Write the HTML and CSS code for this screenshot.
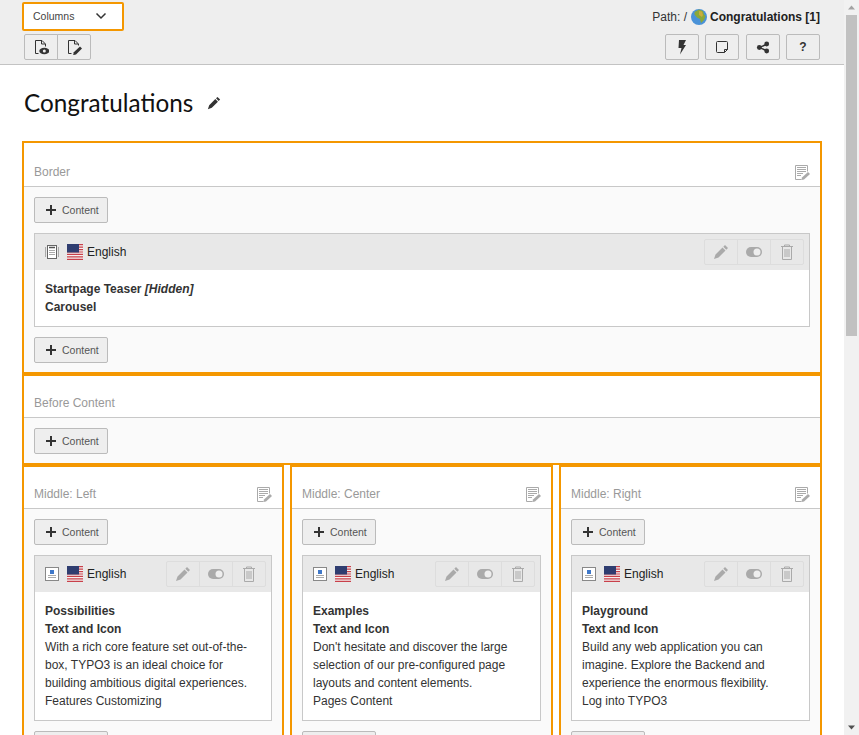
FILE: index.html
```html
<!DOCTYPE html>
<html lang="en">
<head>
    <meta charset="UTF-8">
    <meta name="viewport" content="width=device-width, initial-scale=1.0">
    <title>Columns - Congratulations</title>
    <link rel="stylesheet" href="styles.css">
</head>
<body>

    <svg class="sprites" aria-hidden="true">
        <symbol id="i-plus" viewBox="0 0 14 14"><path d="M6 2h2v4h4v2H8v4H6V8H2V6h4z" fill="currentColor"/></symbol>
        <symbol id="i-flag" viewBox="0 0 16 16">
            <rect width="16" height="16" fill="#f4f0f0"/>
            <path d="M0 0h16v1.200H0zM0 2.500h16v1.200H0zM0 5h16v1.200H0zM0 7.400h16v1.200H0zM0 9.800h16v1.200H0zM0 12.300h16v1.200H0zM0 14.800h16V16H0z" fill="#c8404a"/>
            <rect width="12" height="8.500" fill="#2f3d70"/>
        </symbol>
        <symbol id="i-pencil" viewBox="0 0 16 16"><path d="M12 1l3 3-1.700 1.700-3-3zM9.500 3.500l3 3L5.500 13.500 1 15l1.500-4.500z" fill="currentColor"/></symbol>
        <symbol id="i-toggle" viewBox="0 0 16 16"><rect y="3" width="16" height="10" rx="5" fill="currentColor"/><circle cx="11" cy="8" r="3.500" fill="#eee"/></symbol>
        <symbol id="i-trash" viewBox="0 0 16 16"><path d="M5.500 2.500V1h5v1.500M2 2.500h12M3.500 3v12.500h9V3M6 5v8M8 5v8M10 5v8" fill="none" stroke="currentColor"/></symbol>
        <symbol id="i-notes" viewBox="0 0 16 16">
            <path d="M7.500 15.500h-6v-14h12v6" fill="none" stroke="currentColor"/>
            <path d="M3 3.500h9M3 5.500h9M3 7.500h9M3 9.500h6M3 11.500h4" stroke="currentColor"/>
            <path d="M14 8l2 2-6 5.500-2.500.5.500-2.500z" fill="currentColor"/>
        </symbol>
        <symbol id="i-ce-text" viewBox="0 0 14 14">
            <rect x=".5" y=".5" width="13" height="13" fill="#fff" stroke="#888"/>
            <rect x="5" y="3" width="4" height="4" fill="#3f78c9"/>
            <path d="M3 8.500h8M3 10.500h8" stroke="#aaa"/>
        </symbol>
        <symbol id="i-ce-list" viewBox="0 0 14 14">
            <path d="M.5 2v10M13.500 2v10" stroke="#aaa"/>
            <rect x="2.500" y=".5" width="9" height="13" fill="#fff" stroke="#666"/>
            <path d="M4 2.500h6" stroke="#555" stroke-width="1.500"/>
            <path d="M4 5.500h6M4 7.500h6M4 9.500h6" stroke="#aaa"/>
        </symbol>
    </svg>

    <div class="window">
        <div class="main">

            <header class="docheader">
                <div class="docheader-row">
                    <div class="select-outline">
                        <div class="select-box">
                            <span>Columns</span>
                            <svg class="select-arrow" width="12" height="8" viewBox="0 0 12 8"><path d="M1.500 1.500l4.500 4.500 4.500-4.500" fill="none" stroke="#333" stroke-width="1.500"/></svg>
                        </div>
                    </div>
                    <div class="path">
                        Path: /
                        <svg class="globe" width="16" height="16" viewBox="0 0 16 16">
                            <circle cx="8" cy="8" r="8" fill="#4a92d8"/>
                            <path d="M3.500 3L8 .5l4 1.500 1 3.500 1.500 1.500-1.500 4-3 3-1-4-3-1.500-2.500-3z" fill="#8ba83a"/>
                            <path d="M8 2l3 .5 1 3.500-1 2-3-2z" fill="#c9ad3c"/>
                        </svg>
                        <strong>Congratulations [1]</strong>
                    </div>
                </div>
                <div class="docheader-row docheader-buttons">
                    <div class="btn-group">
                        <button class="btn">
                            <svg width="16" height="16" viewBox="0 0 16 16">
                                <path d="M5.500 14.500h-3v-13h6.500l3.500 3.500v2.500M8.500 1.500V5H12" fill="none" stroke="#333"/>
                                <ellipse cx="11.300" cy="12" rx="5" ry="3.300" fill="#333"/>
                                <circle cx="11.300" cy="12" r="1.500" fill="#eee"/>
                            </svg>
                        </button>
                        <button class="btn">
                            <svg width="16" height="16" viewBox="0 0 16 16">
                                <path d="M5.500 14.500h-3v-13h6.500l3.500 3.500v1.500M8.500 1.500V5H12" fill="none" stroke="#333"/>
                                <path d="M14 7.500l2 2-6 6-2.800.6.600-2.800z" fill="#333"/>
                            </svg>
                        </button>
                    </div>
                    <div class="btn-row">
                        <button class="btn">
                            <svg width="16" height="16" viewBox="0 0 16 16"><path d="M5 1h7L9.500 6H12l-6 9.500L7.500 9H4.500z" fill="#333"/></svg>
                        </button>
                        <button class="btn">
                            <svg width="16" height="16" viewBox="0 0 16 16"><path d="M10.500 13.500H3.500a1 1 0 0 1-1-1v-9a1 1 0 0 1 1-1h9a1 1 0 0 1 1 1v7z" fill="none" stroke="#333"/><path d="M10.500 13.500v-3h3" fill="none" stroke="#333"/></svg>
                        </button>
                        <button class="btn">
                            <svg width="16" height="16" viewBox="0 0 16 16"><path d="M11.700 5.300L4.300 8.500l7.400 3.200" fill="none" stroke="#333" stroke-width="1.500"/><circle cx="4.300" cy="8.500" r="2.400" fill="#333"/><circle cx="11.700" cy="5" r="2.400" fill="#333"/><circle cx="11.700" cy="12" r="2.400" fill="#333"/></svg>
                        </button>
                        <button class="btn btn-help">?</button>
                    </div>
                </div>
            </header>

            <div class="content">
                <h1 class="page-title">
                    Congratulations
                    <svg class="title-edit"><use href="#i-pencil"/></svg>
                </h1>

                <section class="zone zone-first">
                    <div class="zone-head">
                        <span>Border</span>
                        <svg class="zone-edit"><use href="#i-notes"/></svg>
                    </div>
                    <div class="zone-body">
                        <button class="btn-add"><svg><use href="#i-plus"/></svg>Content</button>
                        <article class="card">
                            <div class="card-head">
                                <svg class="ce-icon"><use href="#i-ce-list"/></svg>
                                <svg class="flag"><use href="#i-flag"/></svg>
                                <span class="lang">English</span>
                                <div class="card-actions">
                                    <span class="action"><svg><use href="#i-pencil"/></svg></span>
                                    <span class="action"><svg><use href="#i-toggle"/></svg></span>
                                    <span class="action"><svg><use href="#i-trash"/></svg></span>
                                </div>
                            </div>
                            <div class="card-body">
                                <strong>Startpage Teaser <em>[Hidden]</em></strong><br>
                                <strong>Carousel</strong>
                            </div>
                        </article>
                        <button class="btn-add"><svg><use href="#i-plus"/></svg>Content</button>
                    </div>
                </section>

                <section class="zone">
                    <div class="zone-head">
                        <span>Before Content</span>
                    </div>
                    <div class="zone-body">
                        <button class="btn-add"><svg><use href="#i-plus"/></svg>Content</button>
                    </div>
                </section>

                <div class="zone-columns">
                    <section class="zone">
                        <div class="zone-head">
                            <span>Middle: Left</span>
                            <svg class="zone-edit"><use href="#i-notes"/></svg>
                        </div>
                        <div class="zone-body">
                            <button class="btn-add"><svg><use href="#i-plus"/></svg>Content</button>
                            <article class="card">
                                <div class="card-head">
                                    <svg class="ce-icon"><use href="#i-ce-text"/></svg>
                                    <svg class="flag"><use href="#i-flag"/></svg>
                                    <span class="lang">English</span>
                                    <div class="card-actions">
                                        <span class="action"><svg><use href="#i-pencil"/></svg></span>
                                        <span class="action"><svg><use href="#i-toggle"/></svg></span>
                                        <span class="action"><svg><use href="#i-trash"/></svg></span>
                                    </div>
                                </div>
                                <div class="card-body">
                                    <strong>Possibilities</strong><br>
                                    <strong>Text and Icon</strong><br>
                                    With a rich core feature set out-of-the-box, TYPO3 is an ideal choice for building ambitious digital experiences.<br>
                                    Features Customizing
                                </div>
                            </article>
                            <button class="btn-add"><svg><use href="#i-plus"/></svg>Content</button>
                        </div>
                    </section>

                    <section class="zone">
                        <div class="zone-head">
                            <span>Middle: Center</span>
                            <svg class="zone-edit"><use href="#i-notes"/></svg>
                        </div>
                        <div class="zone-body">
                            <button class="btn-add"><svg><use href="#i-plus"/></svg>Content</button>
                            <article class="card">
                                <div class="card-head">
                                    <svg class="ce-icon"><use href="#i-ce-text"/></svg>
                                    <svg class="flag"><use href="#i-flag"/></svg>
                                    <span class="lang">English</span>
                                    <div class="card-actions">
                                        <span class="action"><svg><use href="#i-pencil"/></svg></span>
                                        <span class="action"><svg><use href="#i-toggle"/></svg></span>
                                        <span class="action"><svg><use href="#i-trash"/></svg></span>
                                    </div>
                                </div>
                                <div class="card-body">
                                    <strong>Examples</strong><br>
                                    <strong>Text and Icon</strong><br>
                                    Don't hesitate and discover the large selection of our pre-configured page layouts and content elements.<br>
                                    Pages Content
                                </div>
                            </article>
                            <button class="btn-add"><svg><use href="#i-plus"/></svg>Content</button>
                        </div>
                    </section>

                    <section class="zone">
                        <div class="zone-head">
                            <span>Middle: Right</span>
                            <svg class="zone-edit"><use href="#i-notes"/></svg>
                        </div>
                        <div class="zone-body">
                            <button class="btn-add"><svg><use href="#i-plus"/></svg>Content</button>
                            <article class="card">
                                <div class="card-head">
                                    <svg class="ce-icon"><use href="#i-ce-text"/></svg>
                                    <svg class="flag"><use href="#i-flag"/></svg>
                                    <span class="lang">English</span>
                                    <div class="card-actions">
                                        <span class="action"><svg><use href="#i-pencil"/></svg></span>
                                        <span class="action"><svg><use href="#i-toggle"/></svg></span>
                                        <span class="action"><svg><use href="#i-trash"/></svg></span>
                                    </div>
                                </div>
                                <div class="card-body">
                                    <strong>Playground</strong><br>
                                    <strong>Text and Icon</strong><br>
                                    Build any web application you can imagine. Explore the Backend and experience the enormous flexibility.<br>
                                    Log into TYPO3
                                </div>
                            </article>
                            <button class="btn-add"><svg><use href="#i-plus"/></svg>Content</button>
                        </div>
                    </section>
                </div>
            </div>
        </div>

        <div class="scrollbar">
            <svg class="scroll-arrow" width="15" height="15" viewBox="0 0 15 15"><path d="M4 9.500l3.500-4 3.500 4z" fill="#a3a3a3"/></svg>
            <div class="scroll-track"><div class="scroll-thumb"></div></div>
            <svg class="scroll-arrow" width="15" height="15" viewBox="0 0 15 15"><path d="M4 5.500l3.500 4 3.500-4z" fill="#505050"/></svg>
        </div>
    </div>

</body>
</html>
```

FILE: styles.css
```css
body {
    margin: 0;
    font-family: "Liberation Sans", Arial, sans-serif;
    font-size: 12px;
    line-height: 18px;
    color: #333;
    background-color: #fff;
}
.sprites {
    display: none;
}
.window {
    display: flex;
    height: 735px;
    overflow: hidden;
}
.main {
    width: 844px;
    flex: none;
    height: 735px;
    overflow: hidden;
}

/* top bar */
.docheader {
    box-sizing: border-box;
    height: 65px;
    padding: 0 24px;
    background-color: #eee;
    border-bottom: 1px solid #c3c3c3;
}
.docheader-row {
    display: flex;
    justify-content: space-between;
    align-items: center;
}
.docheader-buttons {
    margin-top: 3px;
}
.select-outline {
    margin: 2px 0 0 -2px;
    border: 2px solid #f49700;
    border-radius: 2px;
}
.select-box {
    display: flex;
    justify-content: space-between;
    align-items: center;
    box-sizing: border-box;
    width: 98px;
    height: 25px;
    padding: 0 15px 1px 9px;
    font-size: 10.5px;
    color: #444;
    background-color: #fff;
}
.path {
    display: flex;
    align-items: center;
    gap: 3px;
    padding-top: 2px;
}
.path strong {
    color: #212121;
}
.globe {
    margin-left: 1px;
}
.btn-group {
    display: flex;
}
.btn-row {
    display: flex;
    gap: 6.4px;
}
.btn {
    display: flex;
    align-items: center;
    justify-content: center;
    width: 34px;
    height: 26px;
    padding: 0;
    background-color: #eee;
    border: 1px solid #bbb;
    border-radius: 2px;
}
.btn-group .btn:first-child {
    border-radius: 2px 0 0 2px;
}
.btn-group .btn:last-child {
    margin-left: -1px;
    border-radius: 0 2px 2px 0;
}
.btn-help {
    font-family: "Liberation Sans", Arial, sans-serif;
    font-size: 12px;
    font-weight: bold;
    color: #333;
}

/* page */
.content {
    padding: 0 22px;
}
.page-title {
    display: flex;
    align-items: center;
    box-sizing: border-box;
    height: 76px;
    margin: 0;
    padding: 0 0 0 2px;
    font-family: Lato, sans-serif;
    font-size: 24.3px;
    font-weight: normal;
    color: #111;
}
.title-edit {
    width: 14px;
    height: 14px;
    margin-left: 14px;
    color: #333;
}

/* backend layout zones */
.zone {
    border: 2px solid #f49700;
}
.zone-head {
    display: flex;
    justify-content: space-between;
    align-items: flex-end;
    box-sizing: border-box;
    height: 42px;
    padding: 0 10px 5px;
    color: #999;
    background-color: #fff;
    border-bottom: 1px solid #c8c8c8;
}
.zone-first .zone-head {
    height: 44px;
}
.zone-edit {
    width: 16px;
    height: 16px;
    margin-bottom: 1px;
    color: #aaa;
}
.zone-body {
    display: flex;
    flex-direction: column;
    gap: 10px;
    padding: 10px 10px 9px;
    background-color: #fafafa;
}
.zone-columns {
    display: grid;
    grid-template-columns: 262px 263px 263px;
    gap: 6px;
}
.btn-add {
    display: flex;
    align-items: center;
    box-sizing: border-box;
    width: 74px;
    height: 26px;
    padding: 0 0 0 9px;
    font-family: "Liberation Sans", Arial, sans-serif;
    font-size: 10.5px;
    color: #555;
    background-color: #eee;
    border: 1px solid #bbb;
    border-radius: 2px;
}
.btn-add svg {
    width: 14px;
    height: 14px;
    margin-right: 4px;
    color: #333;
}

/* content element */
.card {
    background-color: #fff;
    border: 1px solid #c8c8c8;
}
.card-head {
    display: flex;
    align-items: center;
    height: 36px;
    padding: 0 5px 0 10px;
    background-color: #e8e8e8;
}
.ce-icon {
    width: 14px;
    height: 14px;
}
.flag {
    width: 16px;
    height: 16px;
    margin-left: 8px;
}
.lang {
    margin-left: 4px;
    color: #222;
}
.card-actions {
    display: flex;
    margin-left: auto;
    border: 1px solid #ddd;
    border-radius: 2px;
}
.action {
    display: flex;
    align-items: center;
    justify-content: center;
    width: 32px;
    height: 24px;
    color: #aaa;
}
.action + .action {
    border-left: 1px solid #ddd;
}
.action svg {
    width: 16px;
    height: 16px;
}
.card-body {
    padding: 10px;
    color: #333;
}

/* fake browser scrollbar */
.scrollbar {
    display: flex;
    flex-direction: column;
    width: 15px;
    height: 735px;
    background-color: #f1f1f1;
}
.scroll-arrow {
    flex: none;
}
.scroll-track {
    flex: 1;
    padding: 0 2px;
}
.scroll-thumb {
    height: 321px;
    background-color: #c1c1c1;
}
```
